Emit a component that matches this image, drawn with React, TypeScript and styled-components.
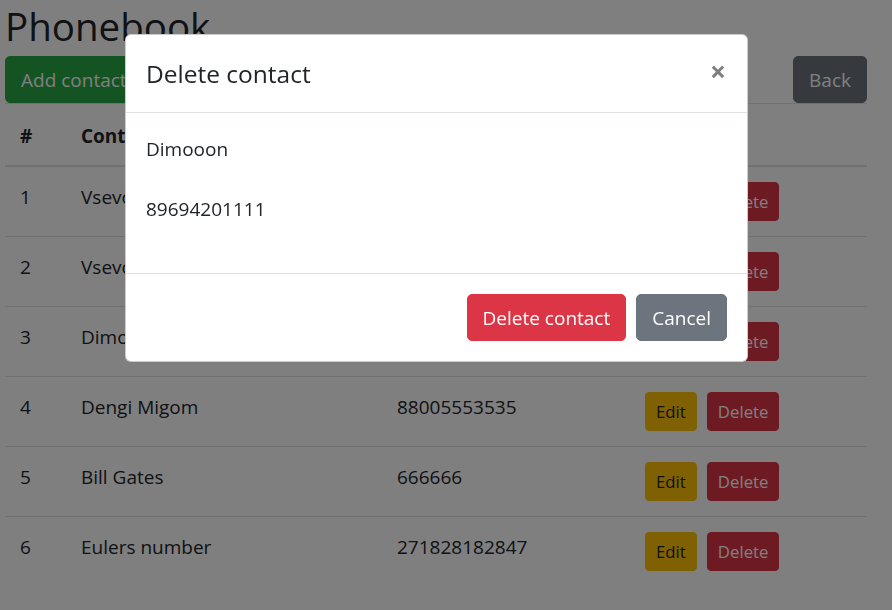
import React from "react";
import styled, { createGlobalStyle, css } from "styled-components";

const GlobalStyle = createGlobalStyle`
  html, body {
    margin: 0;
    padding: 0;
    background: #fff;
  }
  body {
    font-family: "Open Sans", "Noto Sans", "Liberation Sans", sans-serif;
    font-size: 19px;
    line-height: 30px;
    color: #212529;
  }
  * { box-sizing: border-box; }
`;

type Variant = "success" | "secondary" | "warning" | "danger";

const colors: Record<Variant, { bg: string; fg: string }> = {
  success: { bg: "#28a745", fg: "#fff" },
  secondary: { bg: "#6c757d", fg: "#fff" },
  warning: { bg: "#ffc107", fg: "#212529" },
  danger: { bg: "#dc3545", fg: "#fff" },
};

const Button = styled.button<{ $variant: Variant; $small?: boolean }>`
  display: inline-block;
  font-family: inherit;
  font-weight: 400;
  border: 1px solid ${(p) => colors[p.$variant].bg};
  background: ${(p) => colors[p.$variant].bg};
  color: ${(p) => colors[p.$variant].fg};
  cursor: pointer;
  ${(p) =>
    p.$small
      ? css`
          font-size: 16.8px;
          line-height: 27px;
          padding: 5px 10px;
          border-radius: 4px;
        `
      : css`
          font-size: 19px;
          line-height: 30px;
          padding: 7.5px 15px;
          border-radius: 5px;
        `}
`;

const Page = styled.div`
  padding: 0 25px 0 5px;
`;

const Title = styled.h1`
  font-size: 38.5px;
  font-weight: 500;
  line-height: 44px;
  margin: 0 0 8px 0;
  padding-top: 4px;
`;

const Toolbar = styled.div`
  display: flex;
  justify-content: space-between;
  align-items: center;
`;

const Table = styled.table`
  width: 100%;
  border-collapse: collapse;
  table-layout: fixed;
`;

const Th = styled.th<{ $w?: number }>`
  text-align: left;
  font-weight: 700;
  padding: 17px 15px 14px;
  vertical-align: bottom;
  border-top: 1px solid #dee2e6;
  border-bottom: 2px solid #dee2e6;
  ${(p) => (p.$w ? `width: ${p.$w}px;` : "")}
`;

const Td = styled.td`
  padding: 15px;
  vertical-align: top;
  border-top: 1px solid #dee2e6;
`;

const Actions = styled.div`
  display: flex;
  gap: 10px;
`;

const Backdrop = styled.div`
  position: fixed;
  inset: 0;
  background: rgba(0, 0, 0, 0.5);
`;

const ModalLayer = styled.div`
  position: fixed;
  inset: 0;
  display: flex;
  align-items: flex-start;
`;

const Dialog = styled.div`
  width: 623px;
  margin: 34px 0 0 125px;
  background: #fff;
  border: 1px solid rgba(0, 0, 0, 0.2);
  border-radius: 6px;
  display: flex;
  flex-direction: column;
`;

const ModalHeader = styled.div`
  display: flex;
  align-items: flex-start;
  justify-content: space-between;
  padding: 20px;
  border-bottom: 1px solid #dee2e6;
`;

const ModalTitle = styled.h5`
  margin: 0;
  font-size: 24.5px;
  font-weight: 500;
  line-height: 37px;
`;

const Close = styled.button`
  font-family: inherit;
  background: transparent;
  border: 0;
  padding: 22px 21px 18px 20px;
  margin: -20px -20px -20px auto;
  font-size: 28px;
  font-weight: 700;
  line-height: 1;
  color: #000;
  opacity: 0.5;
  cursor: pointer;
`;

const ModalBody = styled.div`
  padding: 21px 20px 19px;
`;

const Para = styled.p`
  margin: 0 0 30px 0;
`;

const ModalFooter = styled.div`
  display: flex;
  justify-content: flex-end;
  align-items: center;
  padding: 15px;
  border-top: 1px solid #dee2e6;
  & > * {
    margin: 5px;
  }
`;

const contacts = [
  { id: 1, name: "Vsevolod Petrov", phone: "89161234567" },
  { id: 2, name: "Vsevolod Ivanov", phone: "89037654321" },
  { id: 3, name: "Dimooon", phone: "89694201111" },
  { id: 4, name: "Dengi Migom", phone: "88005553535" },
  { id: 5, name: "Bill Gates", phone: "666666" },
  { id: 6, name: "Eulers number", phone: "271828182847" },
];

export default function App() {
  return (
    <>
      <GlobalStyle />
      <Page>
        <Title>Phonebook</Title>
        <Toolbar>
          <Button $variant="success">Add contact</Button>
          <Button $variant="secondary">Back</Button>
        </Toolbar>
        <Table>
          <thead>
            <tr>
              <Th $w={61}>#</Th>
              <Th $w={316}>Contact</Th>
              <Th $w={248}>Phone</Th>
              <Th>Actions</Th>
            </tr>
          </thead>
          <tbody>
            {contacts.map((c) => (
              <tr key={c.id}>
                <Td>{c.id}</Td>
                <Td>{c.name}</Td>
                <Td>{c.phone}</Td>
                <Td>
                  <Actions>
                    <Button $variant="warning" $small>
                      Edit
                    </Button>
                    <Button $variant="danger" $small>
                      Delete
                    </Button>
                  </Actions>
                </Td>
              </tr>
            ))}
          </tbody>
        </Table>
      </Page>
      <Backdrop />
      <ModalLayer>
        <Dialog>
          <ModalHeader>
            <ModalTitle>Delete contact</ModalTitle>
            <Close aria-label="Close">×</Close>
          </ModalHeader>
          <ModalBody>
            <Para>Dimooon</Para>
            <Para>89694201111</Para>
          </ModalBody>
          <ModalFooter>
            <Button $variant="danger">Delete contact</Button>
            <Button $variant="secondary">Cancel</Button>
          </ModalFooter>
        </Dialog>
      </ModalLayer>
    </>
  );
}
